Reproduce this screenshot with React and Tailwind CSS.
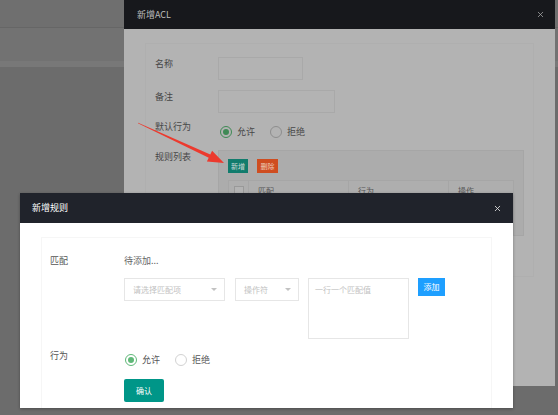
import { X } from 'lucide-react'

const font = "font-['Noto_Sans_CJK_SC','Liberation_Sans',sans-serif]"

function Radio({ checked, label, dim }) {
  const ring = dim
    ? checked ? 'border-[#3f8a55]' : 'border-[#8e8e8e]'
    : checked ? 'border-[#5fb878]' : 'border-[#d2d2d2]'
  const dot = dim ? 'bg-[#3f8a55]' : 'bg-[#5fb878]'
  return (
    <div className="flex items-center">
      <span className={`flex h-[12px] w-[12px] items-center justify-center rounded-full border ${ring} ${dim ? 'bg-[#b3b3b3]' : 'bg-white'}`}>
        {checked && <span className={`h-[6px] w-[6px] rounded-full ${dot}`} />}
      </span>
      <span className={`ml-[5px] text-[9px] leading-[14px] ${dim ? 'text-[#474747]' : 'text-[#555]'}`}>{label}</span>
    </div>
  )
}

function AclModal() {
  return (
    <div className="absolute left-[124px] top-0 h-[386px] w-[431px] bg-[#b3b3b3]">
      <div className="flex h-[29px] items-center justify-between bg-[#17181c] pl-[13px] pr-[10px]">
        <span className="text-[9px] text-[#bdbdbd]">新增ACL</span>
        <X size={9} strokeWidth={2} className="text-[#a9a9a9]" />
      </div>
      <div className="px-[21px] pt-[14px]">
        <div className="h-[234px] border border-[#afafaf] pl-[9px] pt-[13px]">
          <div className="flex h-[23px] items-start">
            <span className="w-[63px] text-[9px] leading-[14px] text-[#474747]">名称</span>
            <div className="h-[23px] w-[85px] border border-[#a9a9a9] bg-[#b3b3b3]" />
          </div>
          <div className="mt-[10px] flex h-[23px] items-start">
            <span className="w-[63px] text-[9px] leading-[14px] text-[#474747]">备注</span>
            <div className="h-[23px] w-[117px] border border-[#a9a9a9] bg-[#b3b3b3]" />
          </div>
          <div className="mt-[7px] flex h-[23px] items-start">
            <span className="w-[63px] text-[9px] leading-[14px] text-[#474747]">默认行为</span>
            <div className="flex h-[23px] items-center gap-[15px] pl-[2px]">
              <Radio checked label="允许" dim />
              <Radio label="拒绝" dim />
            </div>
          </div>
          <div className="mt-[7px] flex items-start">
            <span className="w-[63px] text-[9px] leading-[14px] text-[#474747]">规则列表</span>
            <div className="h-[86px] w-[306px] border border-[#a6a6a6] bg-[#acacac] px-[9px] pt-[8px]">
              <div className="flex gap-[9px]">
                <span className="flex h-[14px] w-[20px] items-center justify-center bg-[#117c6d] text-[7px] text-[#c9d9d6]">新增</span>
                <span className="flex h-[14px] w-[21px] items-center justify-center bg-[#cf4d20] text-[7px] text-[#eccabd]">删除</span>
              </div>
              <div className="mt-[7px] border border-[#a6a6a6] bg-[#b1b1b1] text-[8px] text-[#555]">
                <div className="flex h-[20px] items-center bg-[#aeaeae]">
                  <div className="flex h-full w-[20px] items-center justify-center border-r border-[#a6a6a6]">
                    <span className="h-[10px] w-[10px] border border-[#999] bg-[#b3b3b3]" />
                  </div>
                  <div className="h-full w-[100px] border-r border-[#a6a6a6] pl-[9px] leading-[20px]">匹配</div>
                  <div className="h-full w-[100px] border-r border-[#a6a6a6] pl-[9px] leading-[20px]">行为</div>
                  <div className="h-full flex-1 pl-[9px] leading-[20px]">操作</div>
                </div>
                <div className="h-[34px] border-t border-[#a6a6a6]" />
              </div>
            </div>
          </div>
        </div>
      </div>
    </div>
  )
}

function RuleModal() {
  return (
    <div className="absolute left-[20px] top-[193px] h-[215px] w-[493px] bg-white shadow-[0_1px_3px_rgba(0,0,0,0.3)]">
      <div className="flex h-[30px] items-center justify-between bg-[#20232b] pl-[12px] pr-[11px]">
        <span className="text-[9px] text-white">新增规则</span>
        <X size={9} strokeWidth={2.2} className="text-[#e6e6e6]" />
      </div>
      <div className="px-[21px] pt-[14px]">
        <div className="h-[171px] border border-b-0 border-[#f6f6f6] pl-[8px] pt-[16px]">
          <div className="flex items-start">
            <span className="w-[74px] text-[9px] leading-[14px] text-[#555]">匹配</span>
            <div>
              <div className="text-[9px] leading-[14px] text-[#666]">待添加...</div>
              <div className="mt-[10px] flex items-start">
                <div className="flex h-[23px] w-[101px] items-center justify-between border border-[#e6e6e6] pl-[8px] pr-[7px]">
                  <span className="text-[8px] text-[#c2c2c2]">请选择匹配项</span>
                  <span className="h-0 w-0 border-x-[3px] border-t-[3px] border-x-transparent border-t-[#c2c2c2]" />
                </div>
                <div className="ml-[10px] flex h-[23px] w-[64px] items-center justify-between border border-[#e6e6e6] pl-[8px] pr-[7px]">
                  <span className="text-[8px] text-[#c2c2c2]">操作符</span>
                  <span className="h-0 w-0 border-x-[3px] border-t-[3px] border-x-transparent border-t-[#c2c2c2]" />
                </div>
                <div className="ml-[9px] h-[61px] w-[101px] border border-[#e6e6e6] pl-[6px] pt-[4px] text-[8px] leading-[14px] text-[#c2c2c2]">
                  一行一个匹配值
                </div>
                <span className="ml-[9px] flex h-[18px] w-[27px] items-center justify-center bg-[#1e9fff] text-[8px] text-white">添加</span>
              </div>
            </div>
          </div>
          <div className="mt-[10px] flex items-start">
            <span className="w-[74px] text-[9px] leading-[14px] text-[#555]">行为</span>
            <div>
              <div className="mt-[4px] flex h-[14px] items-center gap-[15px] pl-[1px]">
                <Radio checked label="允许" />
                <Radio label="拒绝" />
              </div>
              <button className="mt-[12px] flex h-[23px] w-[40px] items-center justify-center rounded-[2px] bg-[#009688] text-[8px] text-white">
                确认
              </button>
            </div>
          </div>
        </div>
      </div>
    </div>
  )
}

export default function App() {
  return (
    <div className={`relative h-[415px] w-[558px] overflow-hidden bg-[#6c6c6c] ${font}`}>
      <div className="h-[28px] border-b border-[#666] bg-[#6f6f6f]" />
      <div className="h-[33px] bg-[#727272]" />
      <div className="h-[6px] bg-[#787878]" />
      <AclModal />
      <svg className="absolute left-0 top-0" width="558" height="415" viewBox="0 0 558 415">
        <polygon
          points="138.1,122.7 210.3,154.6 212.1,150.8 224,163 206.9,161.6 208.7,157.8 137.9,123.3"
          fill="#ec3a2e"
        />
      </svg>
      <RuleModal />
    </div>
  )
}
